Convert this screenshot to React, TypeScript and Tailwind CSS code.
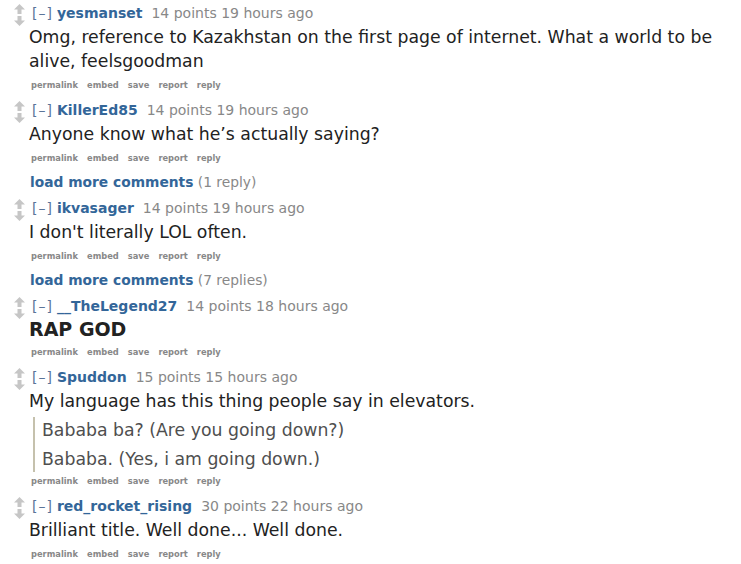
import type { ReactNode } from "react";

type Comment = {
	user: string;
	points: string;
	time: string;
	body: ReactNode;
	more?: string;
};

const comments: Comment[] = [
	{
		user: "yesmanset",
		points: "14 points",
		time: "19 hours ago",
		body: (
			<p>
				Omg, reference to Kazakhstan on the first page of internet. What a
				world to be alive, feelsgoodman
			</p>
		),
	},
	{
		user: "KillerEd85",
		points: "14 points",
		time: "19 hours ago",
		body: <p>Anyone know what he’s actually saying?</p>,
		more: "(1 reply)",
	},
	{
		user: "ikvasager",
		points: "14 points",
		time: "19 hours ago",
		body: <p>I don't literally LOL often.</p>,
		more: "(7 replies)",
	},
	{
		user: "__TheLegend27",
		points: "14 points",
		time: "18 hours ago",
		body: <p className="text-[19px] font-bold leading-[22px]">RAP GOD</p>,
	},
	{
		user: "Spuddon",
		points: "15 points",
		time: "15 hours ago",
		body: (
			<>
				<p>My language has this thing people say in elevators.</p>
				<blockquote className="mt-[4px] mb-[-3px] ml-[4px] flex flex-col gap-[3px] border-l-2 border-[#c5c1ad] pl-[7px] text-[#4f4f4f]">
					<p className="leading-[26px]">Bababa ba? (Are you going down?)</p>
					<p className="leading-[26px]">Bababa. (Yes, i am going down.)</p>
				</blockquote>
			</>
		),
	},
	{
		user: "red_rocket_rising",
		points: "30 points",
		time: "22 hours ago",
		body: <p>Brilliant title. Well done... Well done.</p>,
	},
];

function Arrows() {
	return (
		<div className="flex w-[20px] flex-col items-center pt-[3px]">
			<svg width="11" height="10" viewBox="0 0 11 10">
				<path d="M5.5 0 L11 5.5 L7.5 5.5 L7.5 10 L3.5 10 L3.5 5.5 L0 5.5 Z" fill="#c6c6c6" />
			</svg>
			<svg width="11" height="10" viewBox="0 0 11 10" className="mt-[2px]">
				<path d="M5.5 10 L11 4.5 L7.5 4.5 L7.5 0 L3.5 0 L3.5 4.5 L0 4.5 Z" fill="#c6c6c6" />
			</svg>
		</div>
	);
}

function CommentRow({ c }: { c: Comment }) {
	return (
		<div>
			<div className="flex">
				<Arrows />
				<div className="flex-1">
					<div className="flex items-baseline text-[14px] leading-[24px]">
						<span className="ml-[3px] tracking-[1px] text-[#5a7499]">[–]</span>
						<span className="ml-[4px] font-bold text-[#336699]">{c.user}</span>
						<span className="ml-[9px] text-[#888]">
							{c.points} {c.time}
						</span>
					</div>
					<div className="text-[17.3px] leading-[24px] text-[#222]">{c.body}</div>
					<div className="mt-[1px] ml-[2px] flex gap-[9px] text-[8.3px] font-bold leading-[22px] text-[#888]">
						<span>permalink</span>
						<span>embed</span>
						<span>save</span>
						<span>report</span>
						<span>reply</span>
					</div>
				</div>
			</div>
			{c.more && (
				<div className="mt-[1px] ml-[21px] text-[13.8px] leading-[24px]">
					<span className="font-bold text-[#336699]">load more comments</span>{" "}
					<span className="text-[#888]">{c.more}</span>
				</div>
			)}
		</div>
	);
}

export default function App() {
	return (
		<div
			className="h-[564px] w-[741px] overflow-hidden bg-white pl-[9px] pr-[20px] pt-[1px]"
			style={{ fontFamily: '"DejaVu Sans", Verdana, sans-serif' }}
		>
			<div className="flex flex-col gap-[2px]">
				{comments.map((c) => (
					<CommentRow c={c} key={c.user} />
				))}
			</div>
		</div>
	);
}
